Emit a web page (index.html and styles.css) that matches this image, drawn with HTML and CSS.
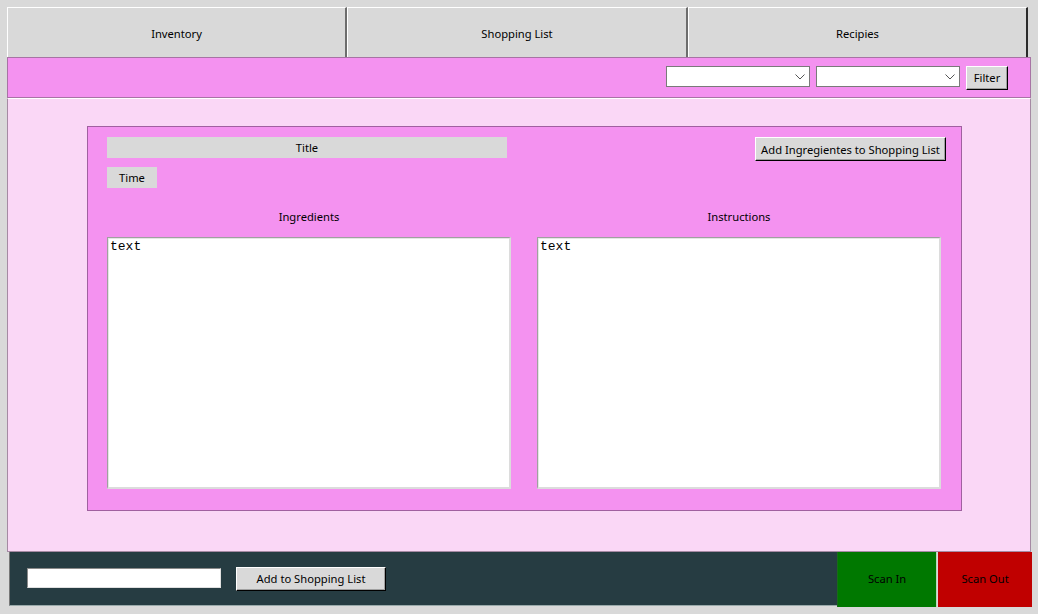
FILE: index.html
```html
<!DOCTYPE html>
<html>
<head>
<meta charset="utf-8">
<link rel="stylesheet" href="styles.css">
</head>
<body>
<div class="app">
  <div class="tabs">
    <div class="tab">Inventory</div>
    <div class="tab tab-mid">Shopping List</div>
    <div class="tab">Recipies</div>
  </div>
  <div class="toolbar">
    <div class="combo"><svg class="chev" width="10" height="6" viewBox="0 0 10 6"><path d="M0.5 0.5 L5 5 L9.5 0.5" fill="none" stroke="#555" stroke-width="1"/></svg></div>
    <div class="combo"><svg class="chev" width="10" height="6" viewBox="0 0 10 6"><path d="M0.5 0.5 L5 5 L9.5 0.5" fill="none" stroke="#555" stroke-width="1"/></svg></div>
    <div class="btn btn-filter">Filter</div>
  </div>
  <div class="content">
    <div class="card">
      <div class="card-top">
        <div class="card-left">
          <div class="lbl lbl-title">Title</div>
          <div class="lbl lbl-time">Time</div>
        </div>
        <div class="btn btn-add-ing">Add Ingregientes to Shopping List</div>
      </div>
      <div class="cols">
        <div class="col">
          <div class="col-head">Ingredients</div>
          <div class="textbox">text</div>
        </div>
        <div class="col">
          <div class="col-head">Instructions</div>
          <div class="textbox">text</div>
        </div>
      </div>
    </div>
  </div>
  <div class="bottom">
    <div class="bottom-bar">
      <div class="entry"></div>
      <div class="btn btn-add-shop">Add to Shopping List</div>
    </div>
    <div class="scan scan-in">Scan In</div>
    <div class="scan scan-out">Scan Out</div>
  </div>
</div>
</body>
</html>
```
FILE: styles.css
```css
* { box-sizing: border-box; }
html, body { margin: 0; padding: 0; }
body {
  background: #d9d9d9;
  font-family: "Noto Sans", "Open Sans", sans-serif;
  font-size: 11.2px;
  color: #000;
  width: 1038px;
  height: 614px;
  overflow: hidden;
}
.app {
  padding: 7px 0 0 7px;
  width: 1031px;
}
.tabs {
  display: flex;
  width: 1022px;
  height: 50px;
}
.tab {
  flex: 0 0 340px;
  display: flex;
  align-items: center;
  justify-content: center;
  border-top: 1px solid #fff;
  border-left: 1px solid #fff;
  border-right: 2px solid #6d6d6d;
  padding-top: 2px;
}
.tab-mid { flex-basis: 341px; }
.tab:last-child { border-right-color: #2b2b2b; }
.toolbar {
  height: 41px;
  background: #f492f0;
  border: 1px solid #a774a4;
  display: flex;
  align-items: center;
  justify-content: flex-end;
  gap: 6px;
  padding: 0 22px 0 0;
}
.combo {
  width: 144px;
  height: 21px;
  background: #fff;
  border: 1px solid #7a7a7a;
  position: relative;
  margin-top: -2px;
}
.chev {
  position: absolute;
  right: 4px;
  top: 7px;
}
.btn {
  background: #d9d9d9;
  border-top: 1px solid #fff;
  border-left: 1px solid #fff;
  border-right: 1px solid #000;
  border-bottom: 1px solid #000;
  box-shadow: inset -1px -1px 0 #a0a0a0;
  display: flex;
  align-items: center;
  justify-content: center;
  white-space: nowrap;
}
.btn-filter {
  width: 42px;
  height: 24px;
}
.content {
  height: 454px;
  background: #fad7f6;
  border: 1px solid #a58aa3;
  border-top-color: #fff;
  padding: 27px 0 0 79px;
}
.card {
  width: 875px;
  height: 385px;
  background: #f492f0;
  border: 1px solid #a060a0;
  padding: 10px 15px 0 19px;
}
.card-top {
  display: flex;
  justify-content: space-between;
  align-items: flex-start;
}
.card-left {
  display: flex;
  flex-direction: column;
  gap: 9px;
}
.lbl {
  background: #d9d9d9;
  height: 21px;
  display: flex;
  align-items: center;
  justify-content: center;
}
.lbl-title { width: 400px; }
.lbl-time { width: 50px; }
.btn-add-ing {
  width: 191px;
  height: 24px;
}
.cols {
  display: flex;
  gap: 26px;
  margin-top: 19px;
}
.col {
  display: flex;
  flex-direction: column;
  width: 404px;
}
.col-head {
  text-align: center;
  height: 20px;
  line-height: 20px;
  margin-bottom: 10px;
}
.textbox {
  height: 252px;
  background: #fff;
  border-top: 1px solid #a0a0a0;
  border-left: 1px solid #a0a0a0;
  border-right: 2px solid #dcdcdc;
  border-bottom: 2px solid #dcdcdc;
  box-shadow: inset 1px 1px 0 #e6e6e6;
  font-family: "Liberation Mono", monospace;
  font-size: 13px;
  line-height: 14px;
  padding: 2px 0 0 2px;
  color: #000;
}
.bottom {
  display: flex;
  height: 56px;
  width: 1025px;
}
.bottom-bar {
  width: 829px;
  margin-left: 2px;
  height: 54px;
  background: #263c42;
  border-left: 1px solid #777;
  border-bottom: 1px solid #9aa;
  display: flex;
  align-items: center;
  padding: 0 0 0 17px;
  gap: 15px;
}
.entry {
  width: 194px;
  height: 20px;
  background: #fff;
  border-top: 1px solid #8a8a8a;
  border-left: 1px solid #8a8a8a;
  border-right: 1px solid #e0e0e0;
  border-bottom: 1px solid #e0e0e0;
  margin-top: -2px;
}
.btn-add-shop {
  width: 150px;
  height: 24px;
  margin-top: 0;
}
.scan {
  display: flex;
  align-items: center;
  justify-content: center;
  height: 55px;
  padding-bottom: 2px;
}
.scan-in {
  width: 100px;
  background: #007800;
  border-left: 1px solid #1a6a1a;
  border-right: 1px solid #b8d8b8;
}
.scan-out {
  width: 94px;
  background: #c00000;
  margin-left: 1px;
}
```
